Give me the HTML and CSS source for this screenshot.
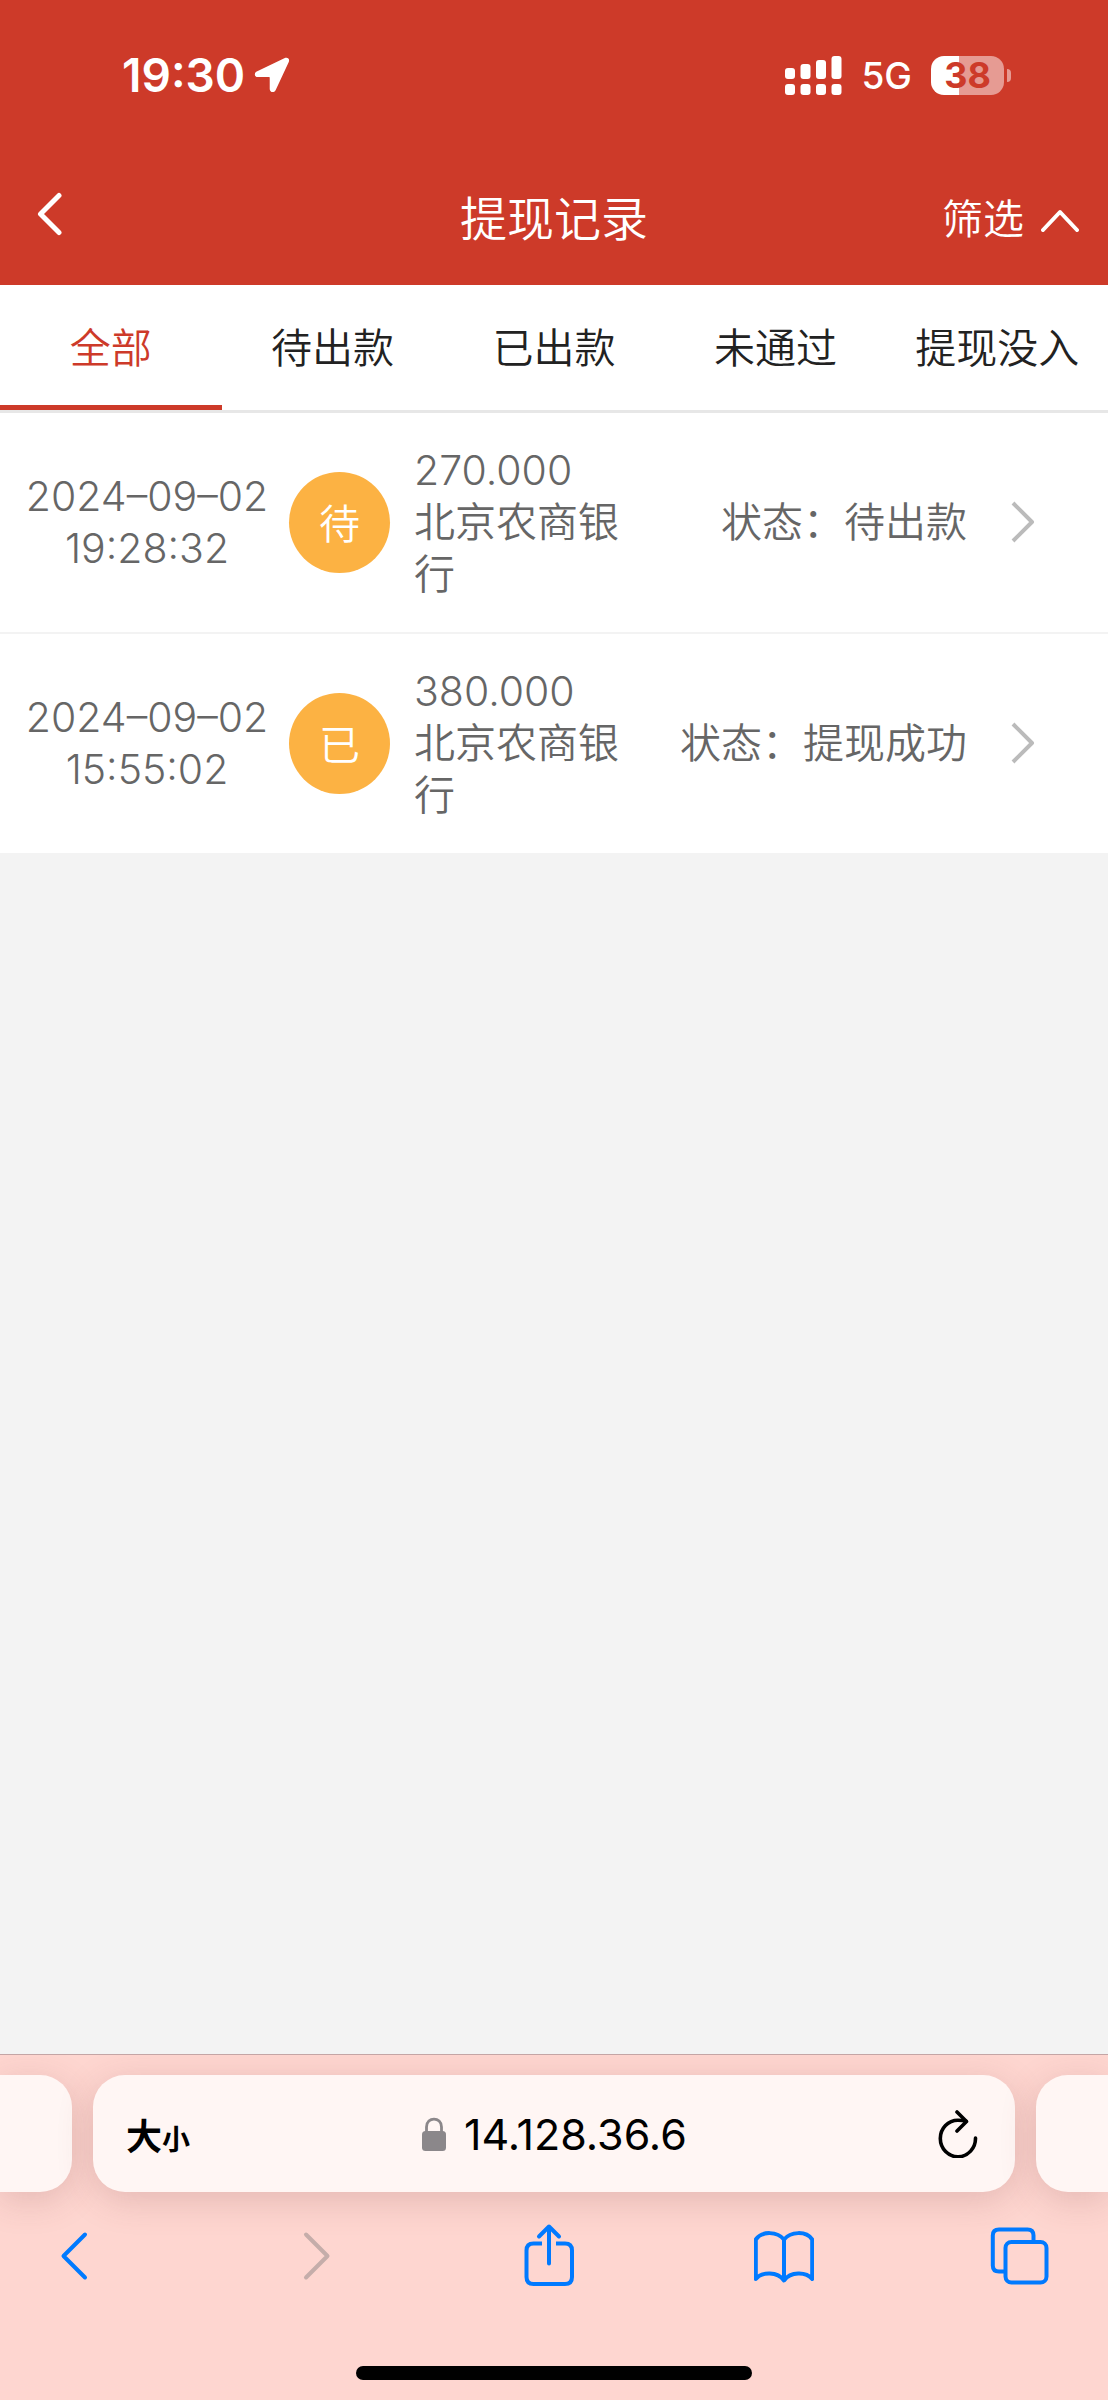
FILE: index.html
```html
<!DOCTYPE html>
<html lang="zh-CN">
<head>
  <meta charset="UTF-8" />
  <meta name="viewport" content="width=device-width, initial-scale=1.0" />
  <title>提现记录</title>
  <link rel="stylesheet" href="styles.css">
</head>
<body>
  <div class="status-bar">
    <div class="status-left">
      <span class="clock">19:30</span>
      <svg class="location" width="36" height="38" viewBox="0 0 38 38" fill="#fff">
        <path d="M32 1.300C35.500-.200 38 1.800 36.700 5.200L22.800 35C21.300 38.200 16.600 37.600 16.600 33.800V21.800Q16.600 21.200 16 21.200H4C.400 21.200-.300 17 2.900 15.400Z" />
      </svg>
    </div>
    <div class="status-right">
      <svg width="57" height="39" viewBox="0 0 57 39" fill="#fff">
        <rect x="0" y="12" width="10" height="11" rx="3" />
        <rect x="15.500" y="8" width="10" height="15" rx="3" />
        <rect x="31" y="4" width="10" height="19" rx="3" />
        <rect x="46.500" y="0" width="10" height="23" rx="3" />
        <rect x="0" y="28" width="10" height="11" rx="3" />
        <rect x="15.500" y="28" width="10" height="11" rx="3" />
        <rect x="31" y="28" width="10" height="11" rx="3" />
        <rect x="46.500" y="28" width="10" height="11" rx="3" />
      </svg>
      <span class="network">5G</span>
      <div class="battery"><span class="battery-level">38</span></div>
    </div>
  </div>

  <header class="header">
    <button type="button" class="back" aria-label="返回">
      <svg width="36" height="48" viewBox="0 0 36 48" fill="none" stroke="#fff" stroke-width="5" stroke-linecap="round" stroke-linejoin="round">
        <path d="M30 3.500 11.500 22 30 40.500" />
      </svg>
    </button>
    <h1>提现记录</h1>
    <button type="button" class="filter">
      筛选
      <svg width="38" height="32" viewBox="0 0 38 32" fill="none" stroke="#fff" stroke-width="4" stroke-linecap="round" stroke-linejoin="round">
        <path d="M2 30 19 12 36 30" />
      </svg>
    </button>
  </header>

  <nav class="tabs">
    <button type="button" class="tab active">全部</button>
    <button type="button" class="tab">待出款</button>
    <button type="button" class="tab">已出款</button>
    <button type="button" class="tab">未通过</button>
    <button type="button" class="tab">提现没入</button>
  </nav>

  <main class="records">
    <a class="record" href="#">
      <time class="time"><span>2024–09–02</span><span>19:28:32</span></time>
      <span class="badge">待</span>
      <span class="bank"><span class="amount">270.000</span>北京农商银行</span>
      <span class="state">状态：待出款</span>
      <svg class="arrow" width="24" height="42" viewBox="0 0 24 42" fill="none" stroke="#bbb" stroke-width="4" stroke-linejoin="round">
        <path d="M2 2 21 21 2 40" />
      </svg>
    </a>
    <a class="record" href="#">
      <time class="time"><span>2024–09–02</span><span>15:55:02</span></time>
      <span class="badge">已</span>
      <span class="bank"><span class="amount">380.000</span>北京农商银行</span>
      <span class="state">状态：提现成功</span>
      <svg class="arrow" width="24" height="42" viewBox="0 0 24 42" fill="none" stroke="#bbb" stroke-width="4" stroke-linejoin="round">
        <path d="M2 2 21 21 2 40" />
      </svg>
    </a>
  </main>

  <footer class="browser">
    <div class="pages">
      <div class="side-page left"></div>
      <div class="address">
        <button type="button" class="text-size">大<small>小</small></button>
        <div class="url">
          <svg width="24" height="34" viewBox="0 0 24 34">
            <path d="M4.500 16V10C4.500-.500 19.500-.500 19.500 10V16" fill="none" stroke="#8b878a" stroke-width="2.800" />
            <rect x="0" y="14" width="24" height="20" rx="3.500" fill="#8b878a" />
          </svg>
          <input type="text" class="url-input" value="14.128.36.6" aria-label="网址" />
        </div>
        <button type="button" class="reload" aria-label="刷新">
          <svg width="44" height="48" viewBox="0 0 44 48" fill="none" stroke="#000" stroke-width="3.600" stroke-linecap="round" stroke-linejoin="round">
            <path d="M37.500 28A17.600 18.300 0 1 1 20 10.200Q25 10.200 28 11.200" />
            <path d="M19 2 28.500 11.500 19 21" />
          </svg>
        </button>
      </div>
      <div class="side-page right"></div>
    </div>

    <div class="toolbar">
      <button type="button" aria-label="后退">
        <svg width="60" height="64" viewBox="0 0 60 64">
          <path d="M41 11.500 19.500 33 41 54.500" />
        </svg>
      </button>
      <button type="button" aria-label="前进" disabled>
        <svg width="60" height="64" viewBox="0 0 60 64">
          <path d="M25 11.500 46.500 33 25 54.500" />
        </svg>
      </button>
      <button type="button" aria-label="分享">
        <svg width="60" height="64" viewBox="0 0 60 64">
          <path d="M25 20.500H16.500Q9.500 20.500 9.500 27.500V54Q9.500 61 16.500 61H48Q55 61 55 54V27.500Q55 20.500 48 20.500H39" stroke-linecap="butt" />
          <path d="M32 40.500V3.500M22 13.500 32 3.500 42 13.500" />
        </svg>
      </button>
      <button type="button" aria-label="书签">
        <svg width="60" height="64" viewBox="0 0 60 64">
          <path d="M30 16.500C23.500 8.500 8 7.500 1.800 16.500V56C8 48.500 23.500 48.500 30 57.500C36.500 48.500 52 48.500 58.200 56V16.500C52 7.500 36.500 8.500 30 16.500V57" />
        </svg>
      </button>
      <button type="button" aria-label="标签页">
        <svg width="60" height="64" viewBox="0 0 60 64">
          <rect x="15.500" y="19" width="41" height="40.500" rx="6" />
          <path d="M15 48.500H9Q2.800 48.500 2.800 42.500V12.500Q2.800 6.500 9 6.500H37.500Q43.500 6.500 43.500 12.500V18" stroke-linecap="butt" />
        </svg>
      </button>
    </div>
    <div class="home-indicator"></div>
  </footer>
</body>
</html>
```
FILE: styles.css
```css
* {
  box-sizing: border-box;
}
body {
  margin: 0;
  min-height: 100vh;
  display: flex;
  flex-direction: column;
  background-color: #f3f3f3;
  color: #666;
  font-family: Inter, "Noto Sans CJK SC", sans-serif;
  font-size: 41px;
  font-weight: 350;
}
button {
  padding: 0;
  border: none;
  background: none;
  color: inherit;
  font: inherit;
  cursor: pointer;
}
svg {
  display: block;
  flex: none;
}

/* status bar */
.status-bar {
  display: flex;
  justify-content: space-between;
  align-items: center;
  height: 150px;
  padding: 0 97px 0 122px;
  background-color: #cd3a29;
  color: #fff;
}
.status-left,
.status-right {
  display: flex;
  align-items: center;
}
.status-left {
  gap: 9px;
}
.status-right {
  gap: 19px;
}
.clock {
  font-size: 46px;
  font-weight: 600;
}
.network {
  font-size: 37px;
  font-weight: 500;
}
.battery {
  display: flex;
  align-items: center;
  gap: 3px;
}
.battery-level {
  width: 73px;
  height: 39px;
  border-radius: 13px;
  background: linear-gradient(to right, #fff 38%, #e69b93 38%);
  color: #cd3a29;
  font-size: 36px;
  font-weight: 700;
  line-height: 39px;
  text-align: center;
}
.battery::after {
  content: "";
  width: 4px;
  height: 13px;
  border-radius: 0 4px 4px 0;
  background-color: #e69b93;
}

/* title bar */
.header {
  display: grid;
  grid-template-columns: 1fr auto 1fr;
  align-items: center;
  height: 135px;
  padding: 0 29px 4px;
  background-color: #cd3a29;
  color: #fff;
}
.header h1 {
  margin: 0;
  font-size: 47px;
  font-weight: 350;
}
.back {
  justify-self: start;
}
.filter {
  display: flex;
  justify-self: end;
  align-items: center;
  gap: 17px;
}

/* tabs */
.tabs {
  display: grid;
  grid-template-columns: repeat(5, 1fr);
  border-bottom: 3px solid #e7e7e7;
  background-color: #fff;
  color: #222;
}
.tab {
  height: 125px;
  border-bottom: 5px solid transparent;
  white-space: nowrap;
}
.tab.active {
  border-bottom-color: #cd3a29;
  color: #cd3a29;
}

/* records */
.records {
  flex: 1;
}
.record {
  display: flex;
  align-items: center;
  padding: 31px 73px 32px 20px;
  border-bottom: 2px solid #f3f3f3;
  background-color: #fff;
  color: #666;
  line-height: 52px;
  text-decoration: none;
}
.time {
  display: flex;
  flex-direction: column;
  width: 254px;
  text-align: center;
  white-space: nowrap;
}
.badge {
  flex: none;
  width: 101px;
  height: 101px;
  margin: 0 24px 0 15px;
  border-radius: 50%;
  background-color: #fcb243;
  color: #fff;
  line-height: 105px;
  text-align: center;
}
.bank {
  width: 220px;
}
.amount {
  display: block;
}
.state {
  flex: 1;
  text-align: right;
  white-space: nowrap;
}
.arrow {
  margin-left: 44px;
}

/* browser bar */
.browser {
  border-top: 1px solid #c4a5a5;
  padding: 20px 0;
  background-color: #fed6d0;
  overflow: hidden;
}
.pages {
  display: flex;
  gap: 21px;
}
.side-page,
.address {
  height: 117px;
  border-radius: 32px;
  background-color: #fff6f4;
  box-shadow: 0 8px 36px rgba(120, 60, 60, 0.2);
}
.side-page {
  width: 72px;
}
.side-page.left {
  border-radius: 0 32px 32px 0;
}
.side-page.right {
  border-radius: 32px 0 0 32px;
}
.address {
  flex: 1;
  display: grid;
  grid-template-columns: 1fr auto 1fr;
  align-items: center;
  padding: 0 33px;
  color: #000;
}
.text-size {
  justify-self: start;
  font-size: 36px;
  font-weight: 700;
}
.text-size small {
  font-size: 28px;
}
.url {
  display: flex;
  align-items: center;
  gap: 18px;
}
.url-input {
  width: 222px;
  padding: 0;
  border: none;
  background: none;
  color: #000;
  font-family: inherit;
  font-size: 43px;
  font-weight: 400;
}
.reload {
  justify-self: end;
}
.toolbar {
  display: flex;
  justify-content: space-between;
  padding: 31px 58px 0 44px;
}
.toolbar svg {
  fill: none;
  stroke: #007aff;
  stroke-width: 4;
  stroke-linecap: round;
  stroke-linejoin: round;
}
.toolbar button:disabled svg {
  stroke: #c5adaa;
}
.home-indicator {
  width: 396px;
  height: 14px;
  margin: 79px auto 0;
  border-radius: 7px;
  background-color: #000;
}
```
